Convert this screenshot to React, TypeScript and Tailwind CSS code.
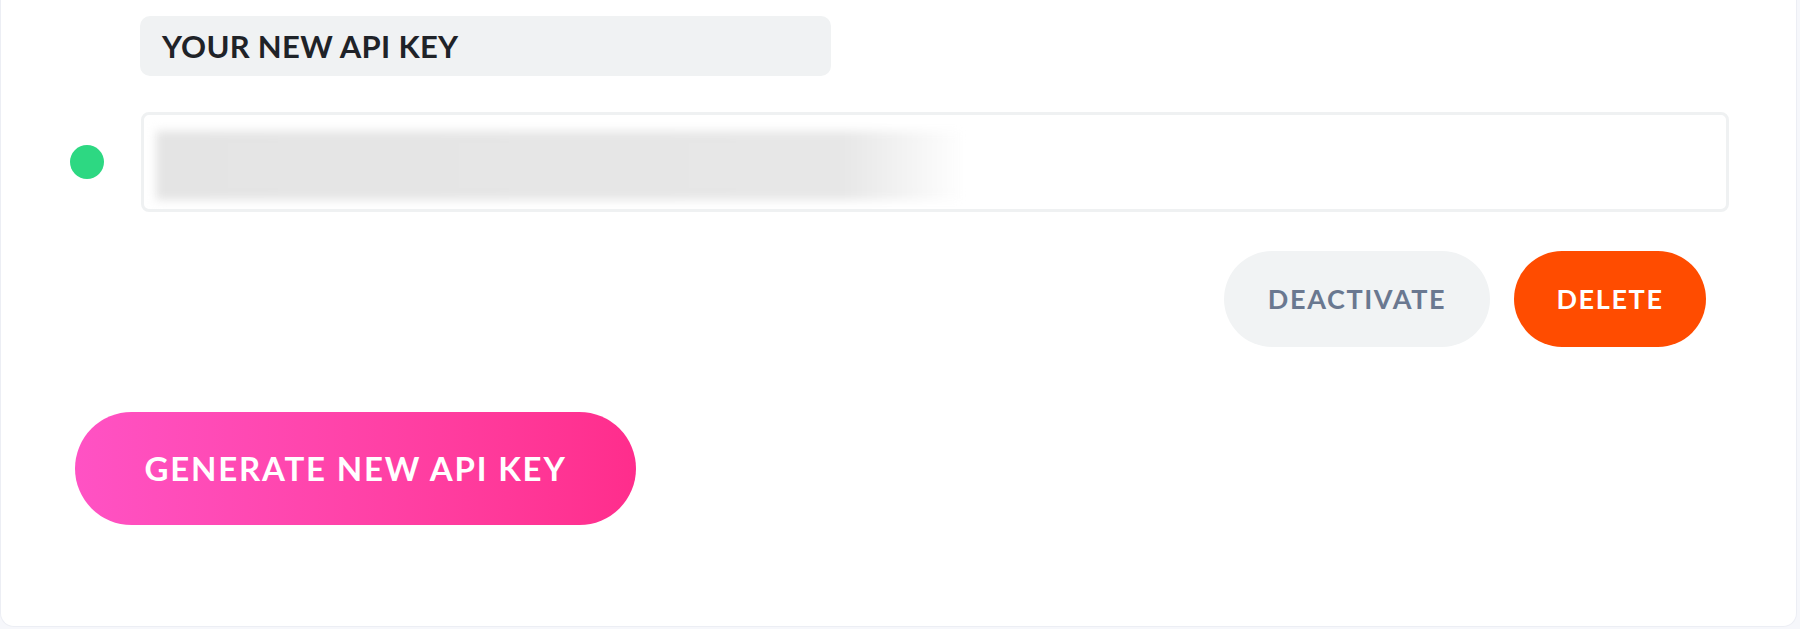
const font = { fontFamily: "Lato, 'Noto Sans', sans-serif" };

const App = () => {
  return (
    <div className="w-full h-[629px] bg-[#f6f7fb]" style={font}>
      <div className="w-[1797px] h-[627px] bg-white border-x border-b border-[#eceef4] rounded-b-[14px] flex flex-col">
        <div className="ml-[139px] mt-[16px] w-[691px] h-[60px] bg-[#f0f2f3] rounded-[10px] flex items-center pl-[22px]">
          <span className="text-[31px] font-bold text-[#1f2328] tracking-[0.01em]">YOUR NEW API KEY</span>
        </div>

        <div className="flex items-center mt-[36px]">
          <div className="ml-[69px] w-[34px] h-[34px] rounded-full bg-[#2dd882]" />
          <div className="ml-[37px] w-[1588px] h-[100px] border-[3px] border-[#eff1f2] rounded-[8px] pl-[12px] pt-[16px] overflow-hidden">
            <div className="w-[809px] h-[69px] bg-linear-to-r from-[#e4e4e4] via-[#e7e7e7] via-85% to-white blur-[5px]" />
          </div>
        </div>

        <div className="flex justify-end gap-[24px] mt-[39px] w-[1705px]">
          <button className="w-[266px] h-[96px] rounded-full bg-[#f1f3f4] text-[#6a7890] text-[27px] font-bold tracking-[0.06em]">
            DEACTIVATE
          </button>
          <button className="w-[192px] h-[96px] rounded-full bg-[#ff4c00] text-white text-[27px] font-bold tracking-[0.06em]">
            DELETE
          </button>
        </div>

        <div className="ml-[74px] mt-[65px]">
          <button className="w-[561px] h-[113px] rounded-full bg-linear-to-r from-[#ff52c4] to-[#ff2d8c] text-white text-[33px] font-bold tracking-[0.055em]">
            GENERATE NEW API KEY
          </button>
        </div>
      </div>
    </div>
  );
};

export default App;
